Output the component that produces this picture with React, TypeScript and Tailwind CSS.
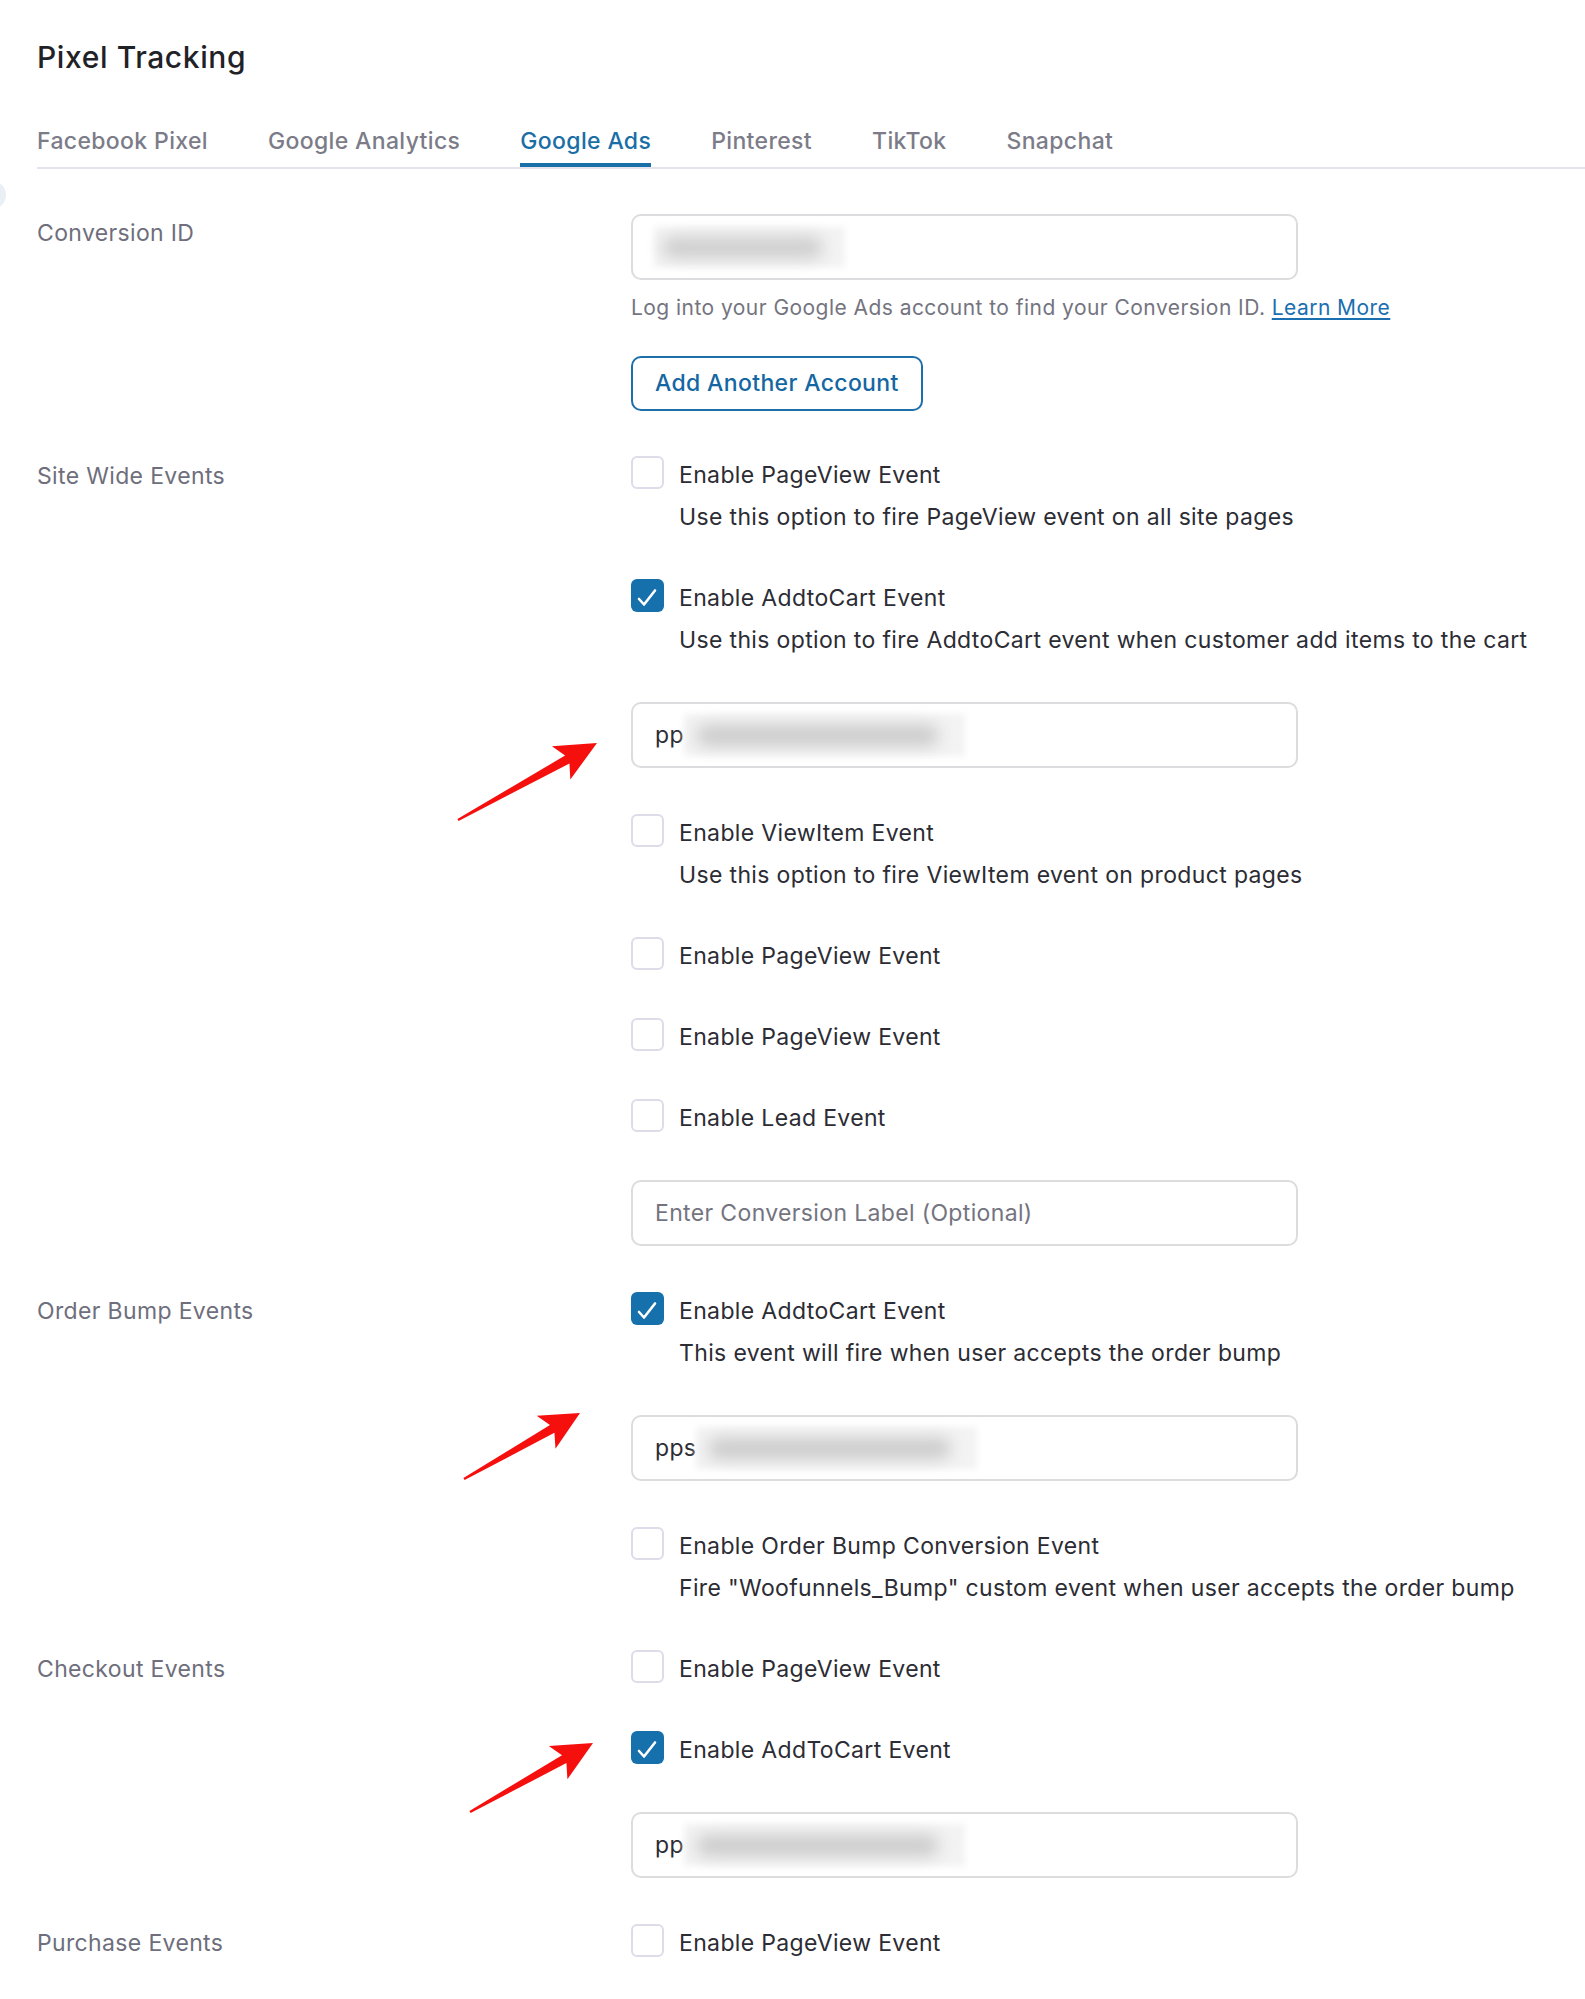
import React from "react";

type Item =
    | { kind: "check"; label: string; desc?: string; checked?: boolean }
    | { kind: "input"; prefix?: string; placeholder?: string; blur?: boolean };

type Section = { title: string; items: Item[] };

const tabs = ["Facebook Pixel", "Google Analytics", "Google Ads", "Pinterest", "TikTok", "Snapchat"];

const sections: Section[] = [
    {
        title: "Site Wide Events",
        items: [
            { kind: "check", label: "Enable PageView Event", desc: "Use this option to fire PageView event on all site pages" },
            {
                kind: "check",
                label: "Enable AddtoCart Event",
                desc: "Use this option to fire AddtoCart event when customer add items to the cart",
                checked: true,
            },
            { kind: "input", prefix: "pp", blur: true },
            { kind: "check", label: "Enable ViewItem Event", desc: "Use this option to fire ViewItem event on product pages" },
            { kind: "check", label: "Enable PageView Event" },
            { kind: "check", label: "Enable PageView Event" },
            { kind: "check", label: "Enable Lead Event" },
            { kind: "input", placeholder: "Enter Conversion Label (Optional)" },
        ],
    },
    {
        title: "Order Bump Events",
        items: [
            { kind: "check", label: "Enable AddtoCart Event", desc: "This event will fire when user accepts the order bump", checked: true },
            { kind: "input", prefix: "pps", blur: true },
            {
                kind: "check",
                label: "Enable Order Bump Conversion Event",
                desc: 'Fire "Woofunnels_Bump" custom event when user accepts the order bump',
            },
        ],
    },
    {
        title: "Checkout Events",
        items: [
            { kind: "check", label: "Enable PageView Event" },
            { kind: "check", label: "Enable AddToCart Event", checked: true },
            { kind: "input", prefix: "pp", blur: true },
        ],
    },
    {
        title: "Purchase Events",
        items: [{ kind: "check", label: "Enable PageView Event" }],
    },
];

// red annotation arrows, tail -> tip, in page pixels
const arrows = [
    { tail: [458, 820], tip: [597, 743], head: 38, half: 19 },
    { tail: [464, 1479], tip: [580, 1413], head: 36, half: 19 },
    { tail: [470, 1812], tip: [593, 1743], head: 37, half: 19 },
];

function arrowPoints(a: { tail: number[]; tip: number[]; head: number; half: number }) {
    const [tx, ty] = a.tail;
    const [px, py] = a.tip;
    const len = Math.hypot(px - tx, py - ty);
    const ux = (px - tx) / len;
    const uy = (py - ty) / len;
    const nx = -uy;
    const ny = ux;
    const hx = px - ux * a.head;
    const hy = py - uy * a.head;
    const pts = [
        [tx + nx * 1.2, ty + ny * 1.2],
        [hx + ux * 4 + nx * 4.5, hy + uy * 4 + ny * 4.5],
        [hx - ux * 3 + nx * a.half, hy - uy * 3 + ny * a.half],
        [px, py],
        [hx - ux * 3 - nx * a.half, hy - uy * 3 - ny * a.half],
        [hx + ux * 4 - nx * 4.5, hy + uy * 4 - ny * 4.5],
        [tx - nx * 1.2, ty - ny * 1.2],
    ];
    return pts.map((p) => p.join(",")).join(" ");
}

function Checkbox({ checked }: { checked?: boolean }) {
    if (checked) {
        return (
            <span className="flex h-[33px] w-[33px] shrink-0 items-center justify-center rounded-[6px] bg-[#1570ab]">
                <svg width="33" height="33" viewBox="0 0 33 33" fill="none">
                    <path d="M8 20 L13 25.5 L24 11.5" stroke="white" strokeWidth="2.6" strokeLinecap="round" strokeLinejoin="round" />
                </svg>
            </span>
        );
    }
    return <span className="h-[33px] w-[33px] shrink-0 rounded-[6px] border-2 border-[#dedce9] bg-white" />;
}

function Blurred({ wide }: { wide?: boolean }) {
    // masked value, shown blurred like in the screenshot
    return (
        <span className={wide ? "relative block h-[42px] w-[281px]" : "relative block h-[40px] w-[191px]"}>
            <span className="absolute inset-0 bg-[#f3f3f3] blur-[3px]" />
            <span
                className={
                    wide
                        ? "absolute left-[12px] right-[26px] top-[11px] bottom-[10px] rounded-full bg-[#cbcbcb] blur-[8px]"
                        : "absolute left-[8px] right-[22px] top-[10px] bottom-[9px] rounded-full bg-[#cdcdcd] blur-[8px]"
                }
            />
        </span>
    );
}

function TextField({ prefix, placeholder, blur }: { prefix?: string; placeholder?: string; blur?: boolean }) {
    return (
        <div className="flex h-[66px] w-[667px] items-center rounded-[10px] border-2 border-[#dcdcdf] bg-white px-[22px] text-[23px] tracking-[0.35px]">
            {prefix && <span className="text-[#2c2c34]">{prefix}</span>}
            {blur && <Blurred wide />}
            {placeholder && <span className="text-[#74747f]">{placeholder}</span>}
        </div>
    );
}

export default function App() {
    return (
        <div className="relative min-h-[1999px] w-full overflow-hidden bg-white font-['Inter',sans-serif] text-[#2c2c34]">
            <div className="absolute left-[-22px] top-[181px] h-[28px] w-[28px] rounded-full bg-[#e9eff4]" />

            <div className="pl-[37px] pt-[39px]">
                <h1 className="text-[30px] leading-[36px] font-medium tracking-[0.6px] text-[#1f2226]">Pixel Tracking</h1>

                {/* Tabs */}
                <nav className="mt-[50px] flex gap-[60px] border-b-2 border-[#e5e4ec]">
                    {tabs.map((t) => (
                        <div
                            key={t}
                            className={
                                t === "Google Ads"
                                    ? "border-b-4 border-[#1a6fa8] pb-[6px] text-[23px] leading-[32px] font-medium tracking-[0.35px] text-[#1a6ea6]"
                                    : "border-b-4 border-transparent pb-[6px] text-[23px] leading-[32px] font-medium tracking-[0.35px] text-[#7c7c89]"
                            }
                        >
                            {t}
                        </div>
                    ))}
                </nav>

                <div className="mt-[45px] grid grid-cols-[594px_1fr] gap-y-[45px] text-[23px] tracking-[0.35px]">
                    {/* Conversion ID */}
                    <div className="pt-[3px] leading-[33px] text-[#6e6e7c]">Conversion ID</div>
                    <div>
                        <div className="flex h-[66px] w-[667px] items-center rounded-[10px] border-2 border-[#dcdcdf] bg-white px-[21px]">
                            <Blurred />
                        </div>
                        <p className="mt-[14px] text-[21px] leading-[28px] tracking-[0.45px] text-[#74747f]">
                            Log into your Google Ads account to find your Conversion ID.{" "}
                            <a className="text-[#1a6fb0] underline underline-offset-[3px]">Learn More</a>
                        </p>
                        <button className="mt-[34px] h-[55px] rounded-[10px] border-2 border-[#1d6fa9] px-[22px] font-medium text-[#1467a3]">
                            Add Another Account
                        </button>
                    </div>

                    {sections.map((s, si) => (
                        <React.Fragment key={s.title}>
                            <div className="pt-[4px] leading-[33px] text-[#6e6e7c]">{s.title}</div>
                            <div className={si === 0 ? "" : "pt-[1px]"}>
                                {s.items.map((it, i) => {
                                    const prev = s.items[i - 1];
                                    const plain = prev && prev.kind === "check" && !prev.desc;
                                    const gap = i === 0 ? "" : plain ? "mt-[48px]" : "mt-[46px]";
                                    if (it.kind === "input") {
                                        return (
                                            <div key={i} className={gap}>
                                                <TextField prefix={it.prefix} placeholder={it.placeholder} blur={it.blur} />
                                            </div>
                                        );
                                    }
                                    return (
                                        <div key={i} className={gap}>
                                            <label className="flex h-[33px] items-center gap-[15px]">
                                                <Checkbox checked={it.checked} />
                                                <span className="pt-[5px] text-[#2c2c34]">{it.label}</span>
                                            </label>
                                            {it.desc && <p className="mt-[12px] pl-[48px] leading-[32px] text-[#2c2c34]">{it.desc}</p>}
                                        </div>
                                    );
                                })}
                            </div>
                        </React.Fragment>
                    ))}
                </div>
            </div>

            {/* annotation arrows */}
            <svg className="pointer-events-none absolute left-0 top-0" width="1585" height="1999">
                {arrows.map((a, i) => (
                    <polygon key={i} points={arrowPoints(a)} fill="#f5100e" />
                ))}
            </svg>
        </div>
    );
}
